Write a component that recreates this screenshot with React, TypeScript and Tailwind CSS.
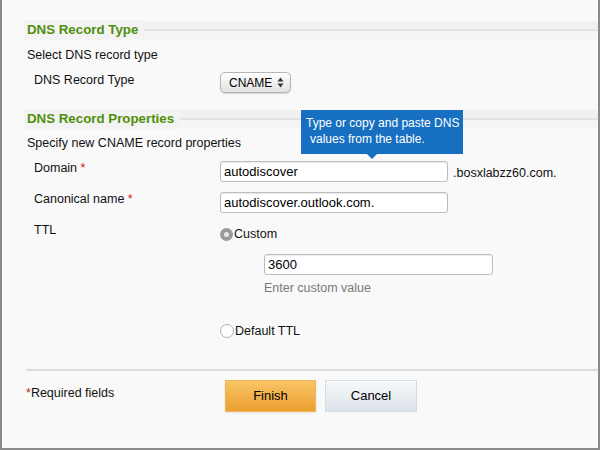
import React from "react";

const font = { fontFamily: '"Liberation Sans", Arial, sans-serif' };

function Heading({ children }: { children: React.ReactNode }) {
  return (
    <div className="relative flex h-[18px] items-center">
      <div className="absolute inset-x-0 top-0 flex h-full flex-col">
        <div className="h-[8px] bg-[#f1f1f1]" />
        <div className="h-[2px] bg-[#e2e2e2]" />
        <div className="flex-1 bg-[#f5f5f5]" />
      </div>
      <span className="relative bg-[#f3f3f3] pl-[3px] pr-[6px] text-[13.3px] font-bold text-[#4f8f0c]">
        {children}
      </span>
    </div>
  );
}

function Input({ value, w }: { value: string; w: string }) {
  return (
    <div
      className={`flex h-[21px] items-center rounded-[3px] border border-[#bdbdbd] bg-white pl-[3px] text-[13px] text-black shadow-[inset_0_1px_1px_rgba(0,0,0,0.08)] ${w}`}
    >
      {value}
    </div>
  );
}

export default function App() {
  return (
    <div
      style={font}
      className="h-[450px] w-[600px] overflow-hidden border-x-2 border-b-2 border-[#8a8a8a] bg-[#f9f9f9] text-[12.5px] text-[#111]"
    >
      <div className="pl-[22px] pt-[21px]">
        <Heading>DNS Record Type</Heading>
        <div className="mt-[6px] h-[20px] pl-[3px] leading-[20px]">Select DNS record type</div>
        <div className="mt-[7px] flex h-[24px]">
          <div className="w-[196px] pl-[10px] leading-[16px]">DNS Record Type</div>
          <div className="flex h-[21px] w-[71px] items-center justify-between rounded-[5px] border border-[#b5b5b5] bg-gradient-to-b from-[#fdfdfd] to-[#e3e3e3] pl-[8px] pr-[6px] text-[12px] text-black shadow-[0_1px_1px_rgba(0,0,0,0.15)]">
            <span>CNAME</span>
            <svg width="7" height="11" viewBox="0 0 7 11">
              <path d="M3.5 0.5 L6.5 4.5 H0.5 Z" fill="#333" />
              <path d="M3.5 10.5 L6.5 6.5 H0.5 Z" fill="#333" />
            </svg>
          </div>
        </div>

        <div className="mt-[14px]">
          <Heading>DNS Record Properties</Heading>
        </div>
        <div className="relative mt-[5px] h-[20px] pl-[3px] leading-[20px]">
          Specify new CNAME record properties
          <div className="absolute left-[277px] top-[-23px] z-10 h-[44px] w-[162px] whitespace-nowrap bg-[#176fc1] px-[5px] pt-[5px] text-[12px] leading-[16px] text-white">
            <div>Type or copy and paste DNS</div>
            <div className="pl-[4px]">values from the table.</div>
            <div className="absolute left-[66px] top-[44px] h-0 w-0 border-x-[5px] border-t-[5px] border-x-transparent border-t-[#176fc1]" />
          </div>
        </div>

        <div className="mt-[8px] flex h-[31px] items-start">
          <div className="w-[196px] pl-[10px] leading-[14px]">
            Domain <span className="text-[#d2201f]">*</span>
          </div>
          <Input value="autodiscover" w="w-[228px]" />
          <div className="pl-[5px] pt-[3px]">.bosxlabzz60.com.</div>
        </div>
        <div className="flex h-[31px] items-start">
          <div className="w-[196px] pl-[10px] leading-[14px]">
            Canonical name <span className="text-[#d2201f]">*</span>
          </div>
          <Input value="autodiscover.outlook.com." w="w-[228px]" />
        </div>

        <div className="flex h-[29px] items-start">
          <div className="w-[196px] pl-[10px] leading-[14px]">TTL</div>
          <div className="mt-[2px] flex items-center">
            <div className="flex h-[13px] w-[13px] items-center justify-center rounded-full bg-[#9a9a9a]">
              <div className="h-[5px] w-[5px] rounded-full bg-[#e8e8e8]" />
            </div>
            <span className="pl-[1px]">Custom</span>
          </div>
        </div>
        <div className="mt-[2px] pl-[240px]">
          <Input value="3600" w="w-[229px]" />
          <div className="mt-[4px] h-[16px] text-[#7a7a7a]">Enter custom value</div>
        </div>
        <div className="mt-[27px] flex items-center pl-[196px]">
          <div className="h-[14px] w-[14px] rounded-full border border-[#b0b0b0] bg-white" />
          <span className="pl-[1px]">Default TTL</span>
        </div>

        <div className="ml-[2px] mt-[28px] h-[2px] bg-[#dcdcdc]" />

        <div className="mt-[9px] flex items-start">
          <div className="w-[201px] pl-[2px] pt-[4px]">
            <span className="text-[#d2201f]">*</span>Required fields
          </div>
          <button className="h-[32px] w-[91px] border border-[#f1b65c] bg-gradient-to-b from-[#f9c464] to-[#eb9f2e] text-[13px] text-black shadow-[0_1px_2px_rgba(0,0,0,0.1)]">
            Finish
          </button>
          <button className="ml-[9px] h-[32px] w-[92px] border border-[#d4dde4] bg-gradient-to-b from-[#f6f9fb] to-[#dce3e9] text-[13px] text-black">
            Cancel
          </button>
        </div>
      </div>
    </div>
  );
}
